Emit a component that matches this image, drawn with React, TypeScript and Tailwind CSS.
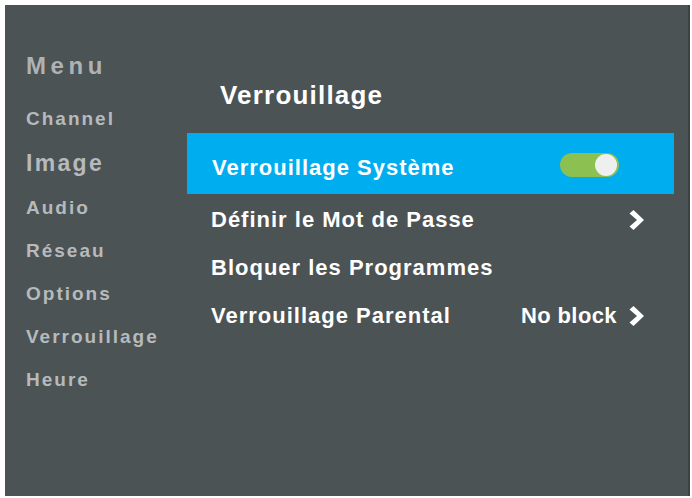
import React from "react";

function Chevron() {
  return (
    <svg width="15" height="20" viewBox="0 0 15 20" className="block">
      <polygon points="0.5,3.5 4.5,0 15,10 4.5,20 0.5,16.5 8,10" fill="#ffffff" />
    </svg>
  );
}

export default function App() {
  const font = { fontFamily: '"Liberation Sans", Arial, sans-serif' };
  return (
    <div className="w-[692px] h-[498px] bg-white pt-[5px] pl-[5px]" style={font}>
      <div className="w-[685px] h-[491px] bg-[#4c5355] border-r-2 border-[#3d4345] flex">
        {/* Sidebar */}
        <div className="w-[182px] pl-[21px] pt-[41px] flex flex-col text-[#b6babc] font-bold">
          <div className="h-[40px] leading-[40px] text-[24px] tracking-[4.6px] text-[#aeb2b4]">Menu</div>
          <div className="mt-[11px] h-[44px] leading-[44px] text-[19px] tracking-[2px]">Channel</div>
          <div className="h-[45px] leading-[45px] text-[23px] tracking-[2.3px]">Image</div>
          <div className="h-[43px] leading-[43px] text-[19px] tracking-[2px]">Audio</div>
          <div className="h-[43px] leading-[43px] text-[19px] tracking-[2px]">Réseau</div>
          <div className="h-[43px] leading-[43px] text-[19px] tracking-[2px]">Options</div>
          <div className="h-[43px] leading-[43px] text-[19px] tracking-[2px]">Verrouillage</div>
          <div className="h-[43px] leading-[43px] text-[19px] tracking-[2px]">Heure</div>
        </div>
        {/* Main */}
        <div className="w-[487px] pt-[70px] flex flex-col text-white font-bold">
          <div className="pl-[33px] h-[40px] leading-[40px] text-[26px] tracking-[1.2px]">Verrouillage</div>
          <div className="mt-[18px] h-[61px] bg-[#00adee] flex items-start">
            <div className="flex-1 pl-[25px] mt-[11px] h-[48px] leading-[48px] text-[22px] tracking-[1px]">
              Verrouillage Système
            </div>
            <div className="mt-[20px] mr-[55px] w-[59px] h-[24px] rounded-full bg-[#8cc152] flex items-center justify-end pr-[2px]">
              <div className="w-[22px] h-[22px] rounded-full bg-[#eef0f0]" />
            </div>
          </div>
          <div className="mt-[2px] h-[48px] flex items-center pl-[24px] pr-[30px] text-[22px] tracking-[1px]">
            <span className="flex-1 leading-[48px]">Définir le Mot de Passe</span>
            <Chevron />
          </div>
          <div className="h-[48px] flex items-center pl-[24px] pr-[30px] text-[22px] tracking-[1px]">
            <span className="flex-1 leading-[48px]">Bloquer les Programmes</span>
          </div>
          <div className="h-[48px] flex items-center pl-[24px] pr-[30px] text-[22px] tracking-[1px]">
            <span className="flex-1 leading-[48px]">Verrouillage Parental</span>
            <span className="leading-[48px] mr-[12px] tracking-[0.4px]">No block</span>
            <Chevron />
          </div>
        </div>
      </div>
    </div>
  );
}
